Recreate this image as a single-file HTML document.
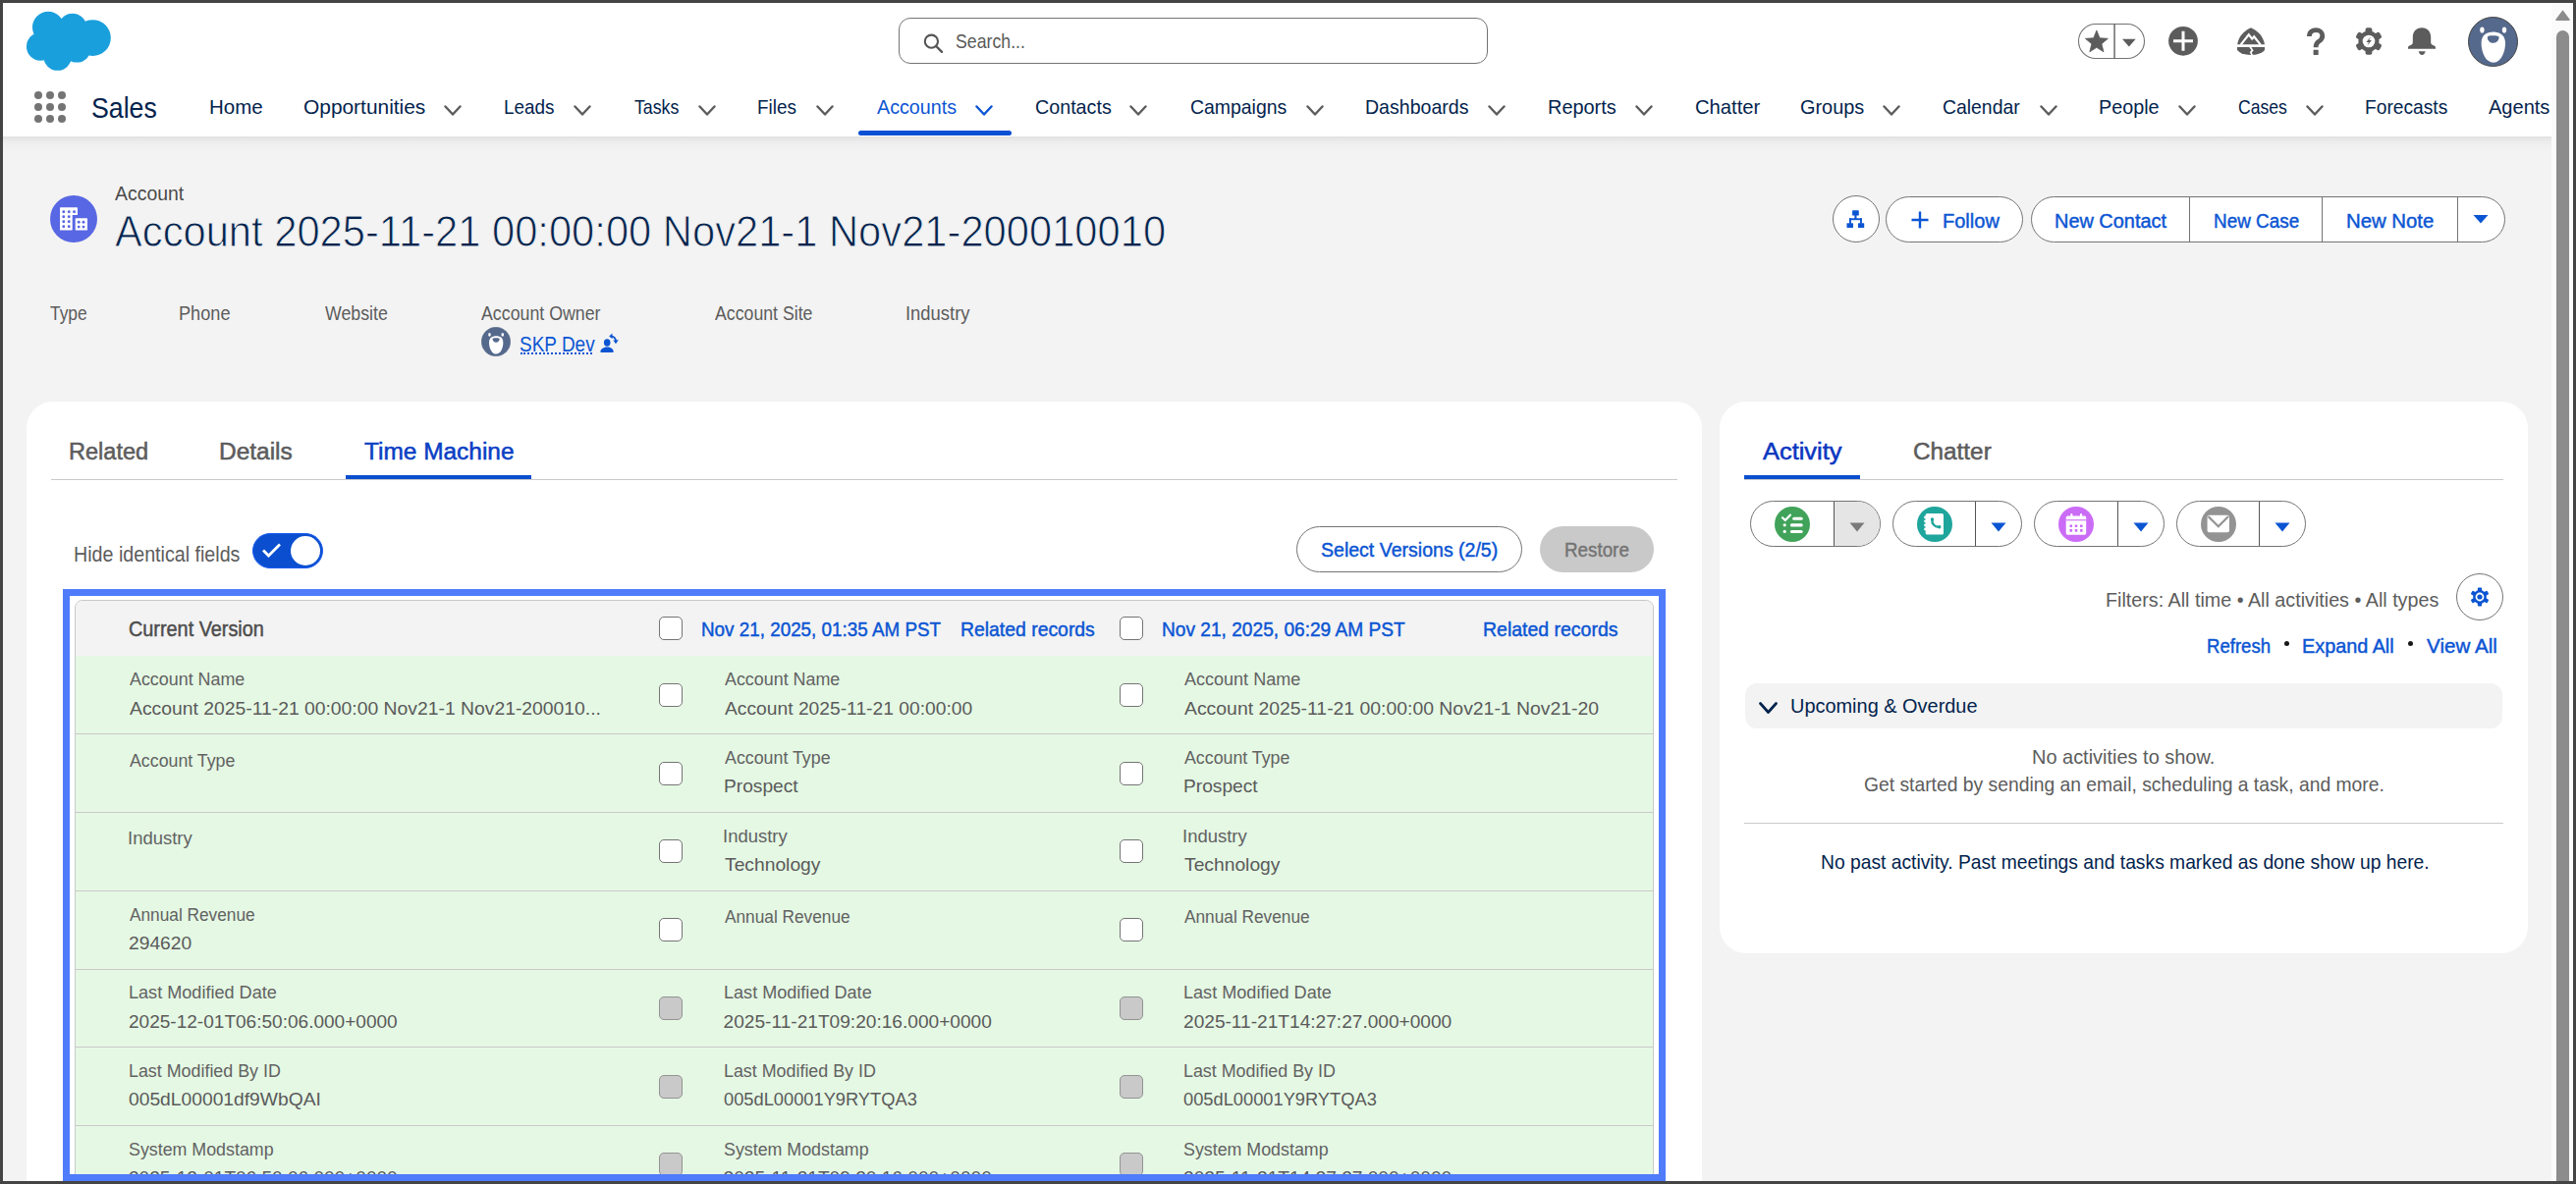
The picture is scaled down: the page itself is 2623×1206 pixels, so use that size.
<!DOCTYPE html>
<html><head><meta charset="utf-8"><style>
html,body{margin:0;padding:0;width:2623px;height:1206px;overflow:hidden;background:#f3f3f3}
body{position:relative;font-family:"Liberation Sans",sans-serif}
.a{position:absolute}
.t{position:absolute;white-space:nowrap;line-height:normal}
.cb{position:absolute;width:24px;height:24px;box-sizing:border-box;border:1.3px solid #747474;border-radius:5px;background:#fff}
.cb.dis{background:#c9c9c9;border-color:#939393}
</style></head><body>
<div class="a" style="left:0;top:0;width:2623px;height:1206px;background:#f3f3f3"></div>
<div class="a" style="left:0;top:0;width:2623px;height:139px;background:#fff"></div>
<div class="a" style="left:0;top:139px;width:2598px;height:17px;background:linear-gradient(rgba(0,0,0,0.075),rgba(0,0,0,0.035) 25%,rgba(0,0,0,0.012) 60%,rgba(0,0,0,0))"></div>
<svg class="a" style="left:20px;top:5px" width="100" height="75" viewBox="0 0 100 75">
<g fill="#1a9fdd">
<circle cx="29.1" cy="22.8" r="16.1"/><circle cx="53.8" cy="23.4" r="14.6"/><circle cx="74.4" cy="33.6" r="18.4"/>
<circle cx="21.2" cy="42.4" r="14.25"/><circle cx="38.6" cy="52.6" r="14.25"/><circle cx="58.3" cy="44.3" r="14.25"/>
<rect x="26" y="24" width="46" height="26"/>
</g></svg>
<div class="a" style="left:915px;top:18px;width:598px;height:45px;border:1px solid #747474;border-radius:12px;background:#fff"></div>
<svg class="a" style="left:938px;top:32px" width="24" height="24" viewBox="0 0 24 24">
<circle cx="10.4" cy="10.2" r="6.6" fill="none" stroke="#555" stroke-width="2.1"/>
<path d="M15.2 15 L21 20.8" stroke="#555" stroke-width="2.4" stroke-linecap="round"/></svg>
<svg class="a" style="left:35px;top:93px" width="32" height="32" viewBox="0 0 32 32"><g fill="#747474"><circle cx="4" cy="4" r="4"/><circle cx="16" cy="4" r="4"/><circle cx="28" cy="4" r="4"/><circle cx="4" cy="16" r="4"/><circle cx="16" cy="16" r="4"/><circle cx="28" cy="16" r="4"/><circle cx="4" cy="28" r="4"/><circle cx="16" cy="28" r="4"/><circle cx="28" cy="28" r="4"/></g></svg>
<svg class="a" style="left:452px;top:107px" width="18" height="11" viewBox="0 0 18 11"><path d="M1.5 1.5 L9.0 9.5 L16.5 1.5" fill="none" stroke="#5c5c5c" stroke-width="2.4" stroke-linecap="round" stroke-linejoin="round"/></svg>
<svg class="a" style="left:583.7px;top:107px" width="18" height="11" viewBox="0 0 18 11"><path d="M1.5 1.5 L9.0 9.5 L16.5 1.5" fill="none" stroke="#5c5c5c" stroke-width="2.4" stroke-linecap="round" stroke-linejoin="round"/></svg>
<svg class="a" style="left:711px;top:107px" width="18" height="11" viewBox="0 0 18 11"><path d="M1.5 1.5 L9.0 9.5 L16.5 1.5" fill="none" stroke="#5c5c5c" stroke-width="2.4" stroke-linecap="round" stroke-linejoin="round"/></svg>
<svg class="a" style="left:830.6px;top:107px" width="18" height="11" viewBox="0 0 18 11"><path d="M1.5 1.5 L9.0 9.5 L16.5 1.5" fill="none" stroke="#5c5c5c" stroke-width="2.4" stroke-linecap="round" stroke-linejoin="round"/></svg>
<svg class="a" style="left:993px;top:107px" width="18" height="11" viewBox="0 0 18 11"><path d="M1.5 1.5 L9.0 9.5 L16.5 1.5" fill="none" stroke="#0b55d3" stroke-width="2.4" stroke-linecap="round" stroke-linejoin="round"/></svg>
<svg class="a" style="left:1150px;top:107px" width="18" height="11" viewBox="0 0 18 11"><path d="M1.5 1.5 L9.0 9.5 L16.5 1.5" fill="none" stroke="#5c5c5c" stroke-width="2.4" stroke-linecap="round" stroke-linejoin="round"/></svg>
<svg class="a" style="left:1329.6px;top:107px" width="18" height="11" viewBox="0 0 18 11"><path d="M1.5 1.5 L9.0 9.5 L16.5 1.5" fill="none" stroke="#5c5c5c" stroke-width="2.4" stroke-linecap="round" stroke-linejoin="round"/></svg>
<svg class="a" style="left:1515px;top:107px" width="18" height="11" viewBox="0 0 18 11"><path d="M1.5 1.5 L9.0 9.5 L16.5 1.5" fill="none" stroke="#5c5c5c" stroke-width="2.4" stroke-linecap="round" stroke-linejoin="round"/></svg>
<svg class="a" style="left:1664.7px;top:107px" width="18" height="11" viewBox="0 0 18 11"><path d="M1.5 1.5 L9.0 9.5 L16.5 1.5" fill="none" stroke="#5c5c5c" stroke-width="2.4" stroke-linecap="round" stroke-linejoin="round"/></svg>
<svg class="a" style="left:1917px;top:107px" width="18" height="11" viewBox="0 0 18 11"><path d="M1.5 1.5 L9.0 9.5 L16.5 1.5" fill="none" stroke="#5c5c5c" stroke-width="2.4" stroke-linecap="round" stroke-linejoin="round"/></svg>
<svg class="a" style="left:2076.8px;top:107px" width="18" height="11" viewBox="0 0 18 11"><path d="M1.5 1.5 L9.0 9.5 L16.5 1.5" fill="none" stroke="#5c5c5c" stroke-width="2.4" stroke-linecap="round" stroke-linejoin="round"/></svg>
<svg class="a" style="left:2218px;top:107px" width="18" height="11" viewBox="0 0 18 11"><path d="M1.5 1.5 L9.0 9.5 L16.5 1.5" fill="none" stroke="#5c5c5c" stroke-width="2.4" stroke-linecap="round" stroke-linejoin="round"/></svg>
<svg class="a" style="left:2347.8px;top:107px" width="18" height="11" viewBox="0 0 18 11"><path d="M1.5 1.5 L9.0 9.5 L16.5 1.5" fill="none" stroke="#5c5c5c" stroke-width="2.4" stroke-linecap="round" stroke-linejoin="round"/></svg>
<div class="a" style="left:874px;top:133px;width:156px;height:5px;background:#0b50d4;border-radius:3px"></div>
<svg class="a" style="left:2100px;top:15px" width="400" height="50" viewBox="2100 15 400 50">
<rect x="2116.5" y="24.5" width="67" height="35" rx="17.5" fill="#fff" stroke="#747474" stroke-width="1.1"/>
<rect x="2152.4" y="24.5" width="1.3" height="35" fill="#555"/>
<path d="M2134.90 31.00 L2138.02 38.76 L2146.36 39.33 L2139.94 44.69 L2141.98 52.80 L2134.90 48.35 L2127.82 52.80 L2129.86 44.69 L2123.44 39.33 L2131.78 38.76 Z" fill="#5c5c5c" stroke="#5c5c5c" stroke-width="0.8" stroke-linejoin="round"/>
<path d="M2161 39.8 L2174.7 39.8 L2167.85 47.6 Z" fill="#5c5c5c"/>
<circle cx="2223" cy="41.8" r="14.9" fill="#5c5c5c"/>
<path d="M2223 31.8 V51.8 M2213 41.8 H2233" stroke="#fff" stroke-width="3"/>
<path d="M2292 28.2 C2286 31 2279.5 36 2278.2 45.3 L2306 45.3 C2304.5 36 2298 31 2292 28.2 Z" fill="#5c5c5c"/>
<path d="M2281.6 45.6 L2289.8 35.3 L2293.2 39.6 L2295.2 37.3 L2301.8 45.6" fill="none" stroke="#fff" stroke-width="2.2"/>
<path d="M2278 48 L2306 48 L2306 51 C2303 54.5 2298 55.9 2292 55.9 C2286 55.9 2281 54.5 2278 51 Z" fill="#5c5c5c"/>
<path d="M2291 47.5 L2293.6 51.3 L2291.8 53.2 L2293.2 56.5" fill="none" stroke="#fff" stroke-width="1.7"/>
<path d="M2351.4 37 C2351.4 32.4 2354.6 30.6 2358.2 30.6 C2362 30.6 2364.8 33 2364.8 36.4 C2364.8 39.8 2362.6 41.2 2360.7 42.5 C2358.8 43.8 2358.1 45 2358.1 48.3" fill="none" stroke="#5c5c5c" stroke-width="4.8"/>
<rect x="2355.6" y="50.8" width="5.1" height="5.1" rx="0.6" fill="#5c5c5c"/>
<g fill="#5c5c5c"><rect x="-3.4" y="-13.8" width="6.8" height="8" rx="1.8" transform="translate(2412 42) rotate(0)"/><rect x="-3.4" y="-13.8" width="6.8" height="8" rx="1.8" transform="translate(2412 42) rotate(60)"/><rect x="-3.4" y="-13.8" width="6.8" height="8" rx="1.8" transform="translate(2412 42) rotate(120)"/><rect x="-3.4" y="-13.8" width="6.8" height="8" rx="1.8" transform="translate(2412 42) rotate(180)"/><rect x="-3.4" y="-13.8" width="6.8" height="8" rx="1.8" transform="translate(2412 42) rotate(240)"/><rect x="-3.4" y="-13.8" width="6.8" height="8" rx="1.8" transform="translate(2412 42) rotate(300)"/><circle cx="2412" cy="42" r="10.6"/></g>
<circle cx="2412" cy="42" r="6.3" fill="#fff"/>
<path d="M2413.9 37.6 L2409.4 43 L2412 43 L2410.4 46.6 L2414.9 41.1 L2412.3 41.1 Z" fill="#5c5c5c"/>
<path d="M2466 28.2 C2460 28.2 2456.8 32.5 2456.8 38 L2456.8 43.5 C2456.8 45 2455 46 2453.5 46.5 C2452.3 47 2452 47.8 2452 48.6 L2452 49.8 L2480 49.8 L2480 48.6 C2480 47.8 2479.7 47 2478.5 46.5 C2477 46 2475.2 45 2475.2 43.5 L2475.2 38 C2475.2 32.5 2472 28.2 2466 28.2 Z" fill="#5c5c5c"/>
<path d="M2462.7 52.2 L2469.7 52.2 C2469.2 54.5 2467.8 55.9 2466.2 55.9 C2464.6 55.9 2463.2 54.5 2462.7 52.2 Z" fill="#5c5c5c"/>
</svg>
<svg class="a" style="left:2512.5px;top:16.5px" width="51" height="51" viewBox="0 0 51 51"><circle cx="25.5" cy="25.5" r="25" fill="#55698c" stroke="#444" stroke-width="1"/><ellipse cx="14.4" cy="13.5" rx="2.2" ry="3.1" fill="#fff"/><ellipse cx="37" cy="13.5" rx="2.2" ry="3.1" fill="#fff"/><path d="M25.8 15.6 C33 15.6 38 19 38 27 C38 37 33 46.8 25.8 46.8 C18.6 46.8 13.6 37 13.6 27 C13.6 19 18.6 15.6 25.8 15.6 Z" fill="#fff"/><path d="M19.8 21 C19.8 19.5 22 19.2 25.7 19.2 C29.4 19.2 31.6 19.5 31.6 21 C31.6 24.5 28.8 26.8 25.7 26.8 C22.6 26.8 19.8 24.5 19.8 21 Z" fill="#55698c"/></svg>
<svg class="a" style="left:51px;top:199px" width="48" height="48" viewBox="0 0 48 48">
<circle cx="24" cy="24" r="24" fill="#5867e3"/>
<g fill="#fff"><rect x="10" y="12.3" width="18" height="7.7" rx="0.5"/><rect x="10" y="19" width="12.7" height="16.4" rx="0.5"/><rect x="25.7" y="23.2" width="12.3" height="12.2" rx="0.5"/></g>
<g fill="#5867e3"><circle cx="13.8" cy="16.7" r="1.45"/><circle cx="19.2" cy="16.7" r="1.45"/><circle cx="24.5" cy="16.7" r="1.45"/><circle cx="13.8" cy="21.8" r="1.45"/><circle cx="19.2" cy="21.8" r="1.45"/><circle cx="13.8" cy="26.8" r="1.45"/><circle cx="19.2" cy="26.8" r="1.45"/><circle cx="13.8" cy="31.7" r="1.45"/><circle cx="19.2" cy="31.7" r="1.45"/><circle cx="29.2" cy="27.2" r="1.45"/><circle cx="34" cy="27.2" r="1.45"/><circle cx="29.2" cy="32.1" r="1.45"/><circle cx="34" cy="32.1" r="1.45"/></g></svg>
<div class="a" style="left:1866px;top:199px;width:46px;height:46px;border:1px solid #747474;border-radius:50%;background:#fff"></div>
<svg class="a" style="left:1870px;top:205px" width="40" height="35" viewBox="1870 205 40 35">
<g fill="#0b55d3"><rect x="1886.1" y="214.3" width="6.7" height="5.3" rx="0.6"/><rect x="1888.4" y="219" width="2.1" height="4"/>
<rect x="1883" y="222.3" width="12.9" height="1.9"/><rect x="1883" y="222.3" width="1.9" height="5.5"/><rect x="1894" y="222.3" width="1.9" height="5.5"/>
<rect x="1880.5" y="227.2" width="6.5" height="4.8" rx="0.5"/><rect x="1892" y="227.2" width="6.2" height="4.8" rx="0.5"/></g></svg>
<div class="a" style="left:1920px;top:200px;width:138px;height:45px;border:1px solid #747474;border-radius:24px;background:#fff"></div>
<svg class="a" style="left:1944px;top:213px" width="22" height="22" viewBox="0 0 22 22"><path d="M11 2.5 V19.5 M2.5 11 H19.5" stroke="#0b55d3" stroke-width="2.4"/></svg>
<div class="a" style="left:2067.5px;top:200px;width:481px;height:45px;border:1px solid #747474;border-radius:24px;background:#fff"></div>
<div class="a" style="left:2228.5px;top:201px;width:1px;height:45px;background:#747474"></div>
<div class="a" style="left:2363.5px;top:201px;width:1px;height:45px;background:#747474"></div>
<div class="a" style="left:2502.1px;top:201px;width:1px;height:45px;background:#747474"></div>
<svg class="a" style="left:2516px;top:216px" width="20" height="14" viewBox="0 0 20 14"><path d="M2.5 3 L17.5 3 L10 11.5 Z" fill="#0b55d3"/></svg>
<svg class="a" style="left:490.0px;top:333.0px" width="30" height="30" viewBox="0 0 51 51"><circle cx="25.5" cy="25.5" r="25" fill="#55698c" stroke="#5c6f8c" stroke-width="1"/><ellipse cx="14.4" cy="13.5" rx="2.2" ry="3.1" fill="#fff"/><ellipse cx="37" cy="13.5" rx="2.2" ry="3.1" fill="#fff"/><path d="M25.8 15.6 C33 15.6 38 19 38 27 C38 37 33 46.8 25.8 46.8 C18.6 46.8 13.6 37 13.6 27 C13.6 19 18.6 15.6 25.8 15.6 Z" fill="#fff"/><path d="M19.8 21 C19.8 19.5 22 19.2 25.7 19.2 C29.4 19.2 31.6 19.5 31.6 21 C31.6 24.5 28.8 26.8 25.7 26.8 C22.6 26.8 19.8 24.5 19.8 21 Z" fill="#55698c"/></svg>
<div class="a" style="left:529.5px;top:359px;width:73px;height:0;border-top:2px dotted #0b55d3"></div>
<svg class="a" style="left:606px;top:335px" width="30" height="30" viewBox="606 335 30 30">
<g fill="#0b55d3"><ellipse cx="618.2" cy="349" rx="3.3" ry="3.7"/>
<path d="M611.4 358.2 C611.4 355.8 614 354.6 616.5 353.6 L620 353.6 C622.5 354.6 624.7 355.8 624.7 358.2 C624.7 358.8 624.3 359.1 623.6 359.1 L612.5 359.1 C611.8 359.1 611.4 358.8 611.4 358.2 Z"/>
<path d="M620.2 342.4 L623.4 339.4 L623.6 345.2 Z"/><path d="M624.4 346.6 L629.8 346.3 L627 350.2 Z"/></g>
<path d="M622.5 342.3 C625 342.8 626.8 344.8 627 347.2" fill="none" stroke="#0b55d3" stroke-width="1.8"/></svg>
<div class="a" style="left:27px;top:409px;width:1706px;height:900px;background:#fff;border-radius:27px"></div>
<div class="a" style="left:52px;top:488px;width:1656px;height:1px;background:#c9c9c9"></div>
<div class="a" style="left:352px;top:484px;width:189px;height:4px;background:#0b4fd0"></div>
<svg class="a" style="left:257px;top:543px" width="72" height="36" viewBox="0 0 72 36">
<rect x="0.5" y="0.5" width="71" height="35" rx="17.5" fill="#0b4fd0" stroke="#1a5cf0" stroke-width="1"/>
<circle cx="54" cy="18" r="15" fill="#fff"/>
<path d="M11 17.5 L16.5 23 L28 11.5" fill="none" stroke="#fff" stroke-width="2.8"/></svg>
<div class="a" style="left:1320px;top:536px;width:228px;height:45px;border:1px solid #747474;border-radius:24px;background:#fff"></div>
<div class="a" style="left:1568px;top:536px;width:116px;height:47px;border-radius:24px;background:#c9c9c9"></div>
<div class="a" style="left:64px;top:600px;width:1632px;height:603px;box-sizing:border-box;border:7px solid #4f7cfb"></div>
<div class="a" id="clip" style="left:71px;top:607px;width:1618px;height:589px;overflow:hidden;background:#fff"><div class="a" style="left:5.00px;top:4.00px;width:1608.00px;height:700.00px;background:#e5f8e4;border:1px solid #c9c9c9;border-radius:8px;box-sizing:border-box"></div>
<div class="a" style="left:6.00px;top:5.00px;width:1606.00px;height:56.00px;background:#f3f3f3;border-radius:7px 7px 0 0"></div>
<div class="a" style="left:6.00px;top:140.25px;width:1606.00px;height:1.00px;background:#c9c9c9"></div>
<div class="a" style="left:6.00px;top:220.00px;width:1606.00px;height:1.00px;background:#c9c9c9"></div>
<div class="a" style="left:6.00px;top:299.75px;width:1606.00px;height:1.00px;background:#c9c9c9"></div>
<div class="a" style="left:6.00px;top:379.50px;width:1606.00px;height:1.00px;background:#c9c9c9"></div>
<div class="a" style="left:6.00px;top:459.25px;width:1606.00px;height:1.00px;background:#c9c9c9"></div>
<div class="a" style="left:6.00px;top:539.00px;width:1606.00px;height:1.00px;background:#c9c9c9"></div>
<div class="cb" style="left:600.00px;top:21.00px"></div>
<div class="cb" style="left:1069.00px;top:21.00px"></div>
<div class="cb" style="left:600.00px;top:88.90px"></div>
<div class="cb" style="left:1069.00px;top:88.90px"></div>
<div class="cb" style="left:600.00px;top:168.65px"></div>
<div class="cb" style="left:1069.00px;top:168.65px"></div>
<div class="cb" style="left:600.00px;top:248.40px"></div>
<div class="cb" style="left:1069.00px;top:248.40px"></div>
<div class="cb" style="left:600.00px;top:328.15px"></div>
<div class="cb" style="left:1069.00px;top:328.15px"></div>
<div class="cb dis" style="left:600.00px;top:407.90px"></div>
<div class="cb dis" style="left:1069.00px;top:407.90px"></div>
<div class="cb dis" style="left:600.00px;top:487.65px"></div>
<div class="cb dis" style="left:1069.00px;top:487.65px"></div>
<div class="cb dis" style="left:600.00px;top:567.40px"></div>
<div class="cb dis" style="left:1069.00px;top:567.40px"></div><div class="t" style="left:60.60px;top:75.33px;font-size:17.68px;color:#626262;transform:scaleX(1.0122);transform-origin:0 0;">Account Name</div>
<div class="t" style="left:60.60px;top:103.60px;font-size:19.13px;color:#5a5a5a;transform:scaleX(1.0114);transform-origin:0 0;">Account 2025-11-21 00:00:00 Nov21-1 Nov21-200010...</div>
<div class="t" style="left:666.60px;top:75.33px;font-size:17.68px;color:#626262;transform:scaleX(1.0122);transform-origin:0 0;">Account Name</div>
<div class="t" style="left:666.60px;top:103.60px;font-size:19.13px;color:#5a5a5a;transform:scaleX(1.0072);transform-origin:0 0;">Account 2025-11-21 00:00:00</div>
<div class="t" style="left:1135.00px;top:75.33px;font-size:17.68px;color:#626262;transform:scaleX(1.0200);transform-origin:0 0;">Account Name</div>
<div class="t" style="left:1135.00px;top:103.60px;font-size:19.13px;color:#5a5a5a;transform:scaleX(1.0144);transform-origin:0 0;">Account 2025-11-21 00:00:00 Nov21-1 Nov21-20</div>
<div class="t" style="left:60.60px;top:157.68px;font-size:17.68px;color:#626262;transform:scaleX(1.0057);transform-origin:0 0;">Account Type</div>
<div class="t" style="left:666.60px;top:155.08px;font-size:17.68px;color:#626262;transform:scaleX(1.0075);transform-origin:0 0;">Account Type</div>
<div class="t" style="left:665.60px;top:183.35px;font-size:19.13px;color:#5a5a5a;transform:scaleX(1.0027);transform-origin:0 0;">Prospect</div>
<div class="t" style="left:1135.00px;top:155.08px;font-size:17.68px;color:#626262;transform:scaleX(1.0057);transform-origin:0 0;">Account Type</div>
<div class="t" style="left:1134.00px;top:183.35px;font-size:19.13px;color:#5a5a5a;transform:scaleX(1.0027);transform-origin:0 0;">Prospect</div>
<div class="t" style="left:58.51px;top:237.43px;font-size:17.68px;color:#626262;transform:scaleX(1.0443);transform-origin:0 0;">Industry</div>
<div class="t" style="left:664.51px;top:234.83px;font-size:17.68px;color:#626262;transform:scaleX(1.0443);transform-origin:0 0;">Industry</div>
<div class="t" style="left:666.60px;top:263.10px;font-size:19.13px;color:#5a5a5a;transform:scaleX(1.0082);transform-origin:0 0;">Technology</div>
<div class="t" style="left:1132.91px;top:234.83px;font-size:17.68px;color:#626262;transform:scaleX(1.0443);transform-origin:0 0;">Industry</div>
<div class="t" style="left:1135.00px;top:263.10px;font-size:19.13px;color:#5a5a5a;transform:scaleX(1.0082);transform-origin:0 0;">Technology</div>
<div class="t" style="left:60.60px;top:314.58px;font-size:17.68px;color:#626262;transform:scaleX(0.9769);transform-origin:0 0;">Annual Revenue</div>
<div class="t" style="left:59.59px;top:342.85px;font-size:19.13px;color:#5a5a5a;transform:scaleX(1.0065);transform-origin:0 0;">294620</div>
<div class="t" style="left:666.60px;top:317.18px;font-size:17.68px;color:#626262;transform:scaleX(0.9769);transform-origin:0 0;">Annual Revenue</div>
<div class="t" style="left:1135.00px;top:317.18px;font-size:17.68px;color:#626262;transform:scaleX(0.9769);transform-origin:0 0;">Annual Revenue</div>
<div class="t" style="left:59.58px;top:394.33px;font-size:17.68px;color:#626262;transform:scaleX(1.0233);transform-origin:0 0;">Last Modified Date</div>
<div class="t" style="left:59.60px;top:422.60px;font-size:19.13px;color:#5a5a5a;transform:scaleX(0.9963);transform-origin:0 0;">2025-12-01T06:50:06.000+0000</div>
<div class="t" style="left:665.58px;top:394.33px;font-size:17.68px;color:#626262;transform:scaleX(1.0226);transform-origin:0 0;">Last Modified Date</div>
<div class="t" style="left:665.60px;top:422.60px;font-size:19.13px;color:#5a5a5a;">2025-11-21T09:20:16.000+0000</div>
<div class="t" style="left:1133.98px;top:394.33px;font-size:17.68px;color:#626262;transform:scaleX(1.0233);transform-origin:0 0;">Last Modified Date</div>
<div class="t" style="left:1134.00px;top:422.60px;font-size:19.13px;color:#5a5a5a;">2025-11-21T14:27:27.000+0000</div>
<div class="t" style="left:59.59px;top:474.08px;font-size:17.68px;color:#626262;transform:scaleX(1.0105);transform-origin:0 0;">Last Modified By ID</div>
<div class="t" style="left:59.59px;top:502.35px;font-size:19.13px;color:#5a5a5a;transform:scaleX(1.0073);transform-origin:0 0;">005dL00001df9WbQAI</div>
<div class="t" style="left:665.59px;top:474.08px;font-size:17.68px;color:#626262;transform:scaleX(1.0105);transform-origin:0 0;">Last Modified By ID</div>
<div class="t" style="left:665.64px;top:502.35px;font-size:19.13px;color:#5a5a5a;transform:scaleX(0.9564);transform-origin:0 0;">005dL00001Y9RYTQA3</div>
<div class="t" style="left:1133.99px;top:474.08px;font-size:17.68px;color:#626262;transform:scaleX(1.0105);transform-origin:0 0;">Last Modified By ID</div>
<div class="t" style="left:1134.04px;top:502.35px;font-size:19.13px;color:#5a5a5a;transform:scaleX(0.9564);transform-origin:0 0;">005dL00001Y9RYTQA3</div>
<div class="t" style="left:59.59px;top:553.83px;font-size:17.68px;color:#626262;transform:scaleX(1.0083);transform-origin:0 0;">System Modstamp</div>
<div class="t" style="left:59.60px;top:582.10px;font-size:19.13px;color:#5a5a5a;transform:scaleX(0.9963);transform-origin:0 0;">2025-12-01T06:50:06.000+0000</div>
<div class="t" style="left:665.59px;top:553.83px;font-size:17.68px;color:#626262;transform:scaleX(1.0083);transform-origin:0 0;">System Modstamp</div>
<div class="t" style="left:665.60px;top:582.10px;font-size:19.13px;color:#5a5a5a;">2025-11-21T09:20:16.000+0000</div>
<div class="t" style="left:1133.99px;top:553.83px;font-size:17.68px;color:#626262;transform:scaleX(1.0083);transform-origin:0 0;">System Modstamp</div>
<div class="t" style="left:1134.00px;top:582.10px;font-size:19.13px;color:#5a5a5a;">2025-11-21T14:27:27.000+0000</div></div>
<div class="a" style="left:1751px;top:409px;width:823px;height:562px;background:#fff;border-radius:27px"></div>
<div class="a" style="left:1776px;top:488px;width:773px;height:1px;background:#c9c9c9"></div>
<div class="a" style="left:1776px;top:484px;width:118px;height:4px;background:#0b4fd0"></div>
<div class="a" style="left:1782px;top:510px;width:130.7px;height:45px;border:1px solid #747474;border-radius:24px;background:#fff;overflow:hidden"><div class="a" style="left:84.4px;top:0;width:47.3px;height:45px;background:#e5e5e5"></div></div>
<div class="a" style="left:1867px;top:511px;width:1px;height:45px;background:#555"></div>
<svg class="a" style="left:1882.1px;top:529.5px" width="18" height="14" viewBox="0 0 18 14"><path d="M1.5 2.5 L16.5 2.5 L9 11.5 Z" fill="#7a7a7a"/></svg>
<svg class="a" style="left:1807px;top:516px" width="36" height="36" viewBox="0 0 36 36"><circle cx="18" cy="18" r="18" fill="#41a35a"/>
<path d="M8 11.3 L10.8 14 L16 8.6" fill="none" stroke="#fff" stroke-width="2.2" stroke-linecap="round" stroke-linejoin="round"/>
<g fill="#fff"><rect x="18.2" y="10.7" width="10.5" height="3.1" rx="1.5"/><rect x="15.9" y="17.3" width="12.8" height="3.1" rx="1.5"/><rect x="15.9" y="23.9" width="12.8" height="3.1" rx="1.5"/>
<circle cx="10.2" cy="18.8" r="1.6"/><circle cx="10.2" cy="25.4" r="1.6"/></g></svg>
<div class="a" style="left:1927px;top:510px;width:130.0px;height:45px;border:1px solid #747474;border-radius:24px;background:#fff;overflow:hidden"></div>
<div class="a" style="left:2011px;top:511px;width:1px;height:45px;background:#555"></div>
<svg class="a" style="left:2026.2px;top:529.5px" width="18" height="14" viewBox="0 0 18 14"><path d="M1.5 2.5 L16.5 2.5 L9 11.5 Z" fill="#0b55d3"/></svg>
<svg class="a" style="left:1952px;top:516px" width="36" height="36" viewBox="0 0 36 36"><circle cx="18" cy="18" r="18" fill="#1ea59c"/>
<rect x="8.7" y="7" width="18.3" height="21.5" rx="1.6" fill="#fff"/>
<g fill="#fff"><circle cx="8.5" cy="11" r="1.4"/><circle cx="8.5" cy="15" r="1.4"/><circle cx="8.5" cy="19" r="1.4"/><circle cx="8.5" cy="23" r="1.4"/></g>
<path d="M15.4 13.4 C14.8 17.6 18.2 21 22.4 20.7" fill="none" stroke="#1ea59c" stroke-width="2.4" stroke-linecap="round"/>
<circle cx="15.5" cy="13" r="1.7" fill="#1ea59c"/><circle cx="22.8" cy="20.7" r="1.7" fill="#1ea59c"/></svg>
<div class="a" style="left:2071px;top:510px;width:131.0px;height:45px;border:1px solid #747474;border-radius:24px;background:#fff;overflow:hidden"></div>
<div class="a" style="left:2156px;top:511px;width:1px;height:45px;background:#555"></div>
<svg class="a" style="left:2171.0px;top:529.5px" width="18" height="14" viewBox="0 0 18 14"><path d="M1.5 2.5 L16.5 2.5 L9 11.5 Z" fill="#0b55d3"/></svg>
<svg class="a" style="left:2096px;top:516px" width="36" height="36" viewBox="0 0 36 36"><circle cx="18" cy="18" r="18" fill="#cb6cf6"/>
<rect x="7.7" y="9.5" width="20.5" height="19.2" rx="1.6" fill="#fff"/>
<rect x="7.7" y="13.2" width="20.5" height="1.1" fill="#cb6cf6"/>
<g fill="#fff"><rect x="12.3" y="7" width="2.1" height="4" rx="1"/><rect x="22" y="7" width="2.1" height="4" rx="1"/></g>
<g fill="#cb6cf6"><rect x="11.5" y="18.4" width="2.6" height="2.6" rx="0.4"/><rect x="16.7" y="18.4" width="2.6" height="2.6" rx="0.4"/><rect x="22" y="18.4" width="2.6" height="2.6" rx="0.4"/>
<rect x="11.5" y="23.1" width="2.6" height="2.6" rx="0.4"/><rect x="16.7" y="23.1" width="2.6" height="2.6" rx="0.4"/><rect x="22" y="23.1" width="2.6" height="2.6" rx="0.4"/></g></svg>
<div class="a" style="left:2216px;top:510px;width:130.0px;height:45px;border:1px solid #747474;border-radius:24px;background:#fff;overflow:hidden"></div>
<div class="a" style="left:2300px;top:511px;width:1px;height:45px;background:#555"></div>
<svg class="a" style="left:2315.2px;top:529.5px" width="18" height="14" viewBox="0 0 18 14"><path d="M1.5 2.5 L16.5 2.5 L9 11.5 Z" fill="#0b55d3"/></svg>
<svg class="a" style="left:2241px;top:516px" width="36" height="36" viewBox="0 0 36 36"><circle cx="18" cy="18" r="18" fill="#939393"/>
<rect x="6.6" y="8.8" width="22.4" height="17.4" rx="1.8" fill="#fff"/>
<path d="M7.5 10 L17.8 20.3 L28.1 10" fill="none" stroke="#939393" stroke-width="2.2"/></svg>
<div class="a" style="left:2501px;top:584px;width:46px;height:46px;border:1px solid #747474;border-radius:50%;background:#fff"></div>
<svg class="a" style="left:2513.6px;top:597.4px" width="22" height="22" viewBox="-11 -11 22 22"><g fill="#0b55d3"><rect x="-2.1" y="-9.6" width="4.2" height="5" rx="1" transform="rotate(0)"/><rect x="-2.1" y="-9.6" width="4.2" height="5" rx="1" transform="rotate(60)"/><rect x="-2.1" y="-9.6" width="4.2" height="5" rx="1" transform="rotate(120)"/><rect x="-2.1" y="-9.6" width="4.2" height="5" rx="1" transform="rotate(180)"/><rect x="-2.1" y="-9.6" width="4.2" height="5" rx="1" transform="rotate(240)"/><rect x="-2.1" y="-9.6" width="4.2" height="5" rx="1" transform="rotate(300)"/><circle r="6.9"/></g><circle r="4.4" fill="#fff"/><circle r="2.6" fill="#0b55d3"/></svg>
<div class="a" style="left:2326px;top:653px;width:5px;height:5px;border-radius:50%;background:#181818"></div>
<div class="a" style="left:2451.5px;top:653px;width:5px;height:5px;border-radius:50%;background:#181818"></div>
<div class="a" style="left:1777px;top:695.5px;width:771px;height:46.5px;background:#f3f3f3;border-radius:12px"></div>
<svg class="a" style="left:1791px;top:715px" width="19" height="12" viewBox="0 0 19 12"><path d="M1.5 1.5 L9.5 10.5 L17.5 1.5" fill="none" stroke="#03234d" stroke-width="2.7" stroke-linecap="round" stroke-linejoin="round"/></svg>
<div class="a" style="left:1776px;top:838px;width:773px;height:1px;background:#c9c9c9"></div>
<div class="t" style="left:972.91px;top:31.11px;font-size:19.93px;color:#5a5a5a;transform:scaleX(0.8896);transform-origin:0 0;">Search...</div>
<div class="t" style="left:92.87px;top:92.53px;font-size:30.29px;color:#03234d;transform:scaleX(0.8818);transform-origin:0 0;">Sales</div>
<div class="t" style="left:213.29px;top:97.80px;font-size:20.43px;color:#03234d;transform:scaleX(1.0038);transform-origin:0 0;">Home</div>
<div class="t" style="left:308.78px;top:97.80px;font-size:20.43px;color:#03234d;transform:scaleX(1.0233);transform-origin:0 0;">Opportunities</div>
<div class="t" style="left:513.15px;top:97.80px;font-size:20.43px;color:#03234d;transform:scaleX(0.9245);transform-origin:0 0;">Leads</div>
<div class="t" style="left:645.80px;top:97.80px;font-size:20.43px;color:#03234d;transform:scaleX(0.8692);transform-origin:0 0;">Tasks</div>
<div class="t" style="left:771.15px;top:97.80px;font-size:20.43px;color:#03234d;transform:scaleX(0.9268);transform-origin:0 0;">Files</div>
<div class="t" style="left:893.00px;top:97.80px;font-size:20.43px;color:#0b55d3;transform:scaleX(0.9639);transform-origin:0 0;">Accounts</div>
<div class="t" style="left:1053.84px;top:97.80px;font-size:20.43px;color:#03234d;transform:scaleX(0.9646);transform-origin:0 0;">Contacts</div>
<div class="t" style="left:1212.05px;top:97.80px;font-size:20.43px;color:#03234d;transform:scaleX(0.9510);transform-origin:0 0;">Campaigns</div>
<div class="t" style="left:1389.69px;top:97.80px;font-size:20.43px;color:#03234d;transform:scaleX(0.9574);transform-origin:0 0;">Dashboards</div>
<div class="t" style="left:1575.75px;top:97.80px;font-size:20.43px;color:#03234d;transform:scaleX(0.9754);transform-origin:0 0;">Reports</div>
<div class="t" style="left:1725.61px;top:97.80px;font-size:20.43px;color:#03234d;transform:scaleX(0.9909);transform-origin:0 0;">Chatter</div>
<div class="t" style="left:1832.73px;top:97.80px;font-size:20.43px;color:#03234d;transform:scaleX(0.9738);transform-origin:0 0;">Groups</div>
<div class="t" style="left:1978.05px;top:97.80px;font-size:20.43px;color:#03234d;transform:scaleX(0.9488);transform-origin:0 0;">Calendar</div>
<div class="t" style="left:2136.56px;top:97.80px;font-size:20.43px;color:#03234d;transform:scaleX(0.9689);transform-origin:0 0;">People</div>
<div class="t" style="left:2278.64px;top:97.80px;font-size:20.43px;color:#03234d;transform:scaleX(0.8625);transform-origin:0 0;">Cases</div>
<div class="t" style="left:2407.62px;top:97.80px;font-size:20.43px;color:#03234d;transform:scaleX(0.9402);transform-origin:0 0;">Forecasts</div>
<div class="t" style="left:2533.70px;top:97.80px;font-size:20.43px;color:#03234d;transform:scaleX(0.9810);transform-origin:0 0;">Agents</div>
<div class="t" style="left:117.30px;top:186.10px;font-size:20.43px;color:#4a4a4a;transform:scaleX(0.9514);transform-origin:0 0;">Account</div>
<div class="t" style="left:116.60px;top:210.63px;font-size:43.77px;color:#03234d;transform:scaleX(0.9526);transform-origin:0 0;-webkit-text-stroke:0.9px #f3f3f3;">Account 2025-11-21 00:00:00 Nov21-1 Nov21-200010010</div>
<div class="t" style="left:1977.63px;top:213.27px;font-size:20.58px;color:#0b55d3;-webkit-text-stroke:0.45px #0b55d3;transform:scaleX(0.9729);transform-origin:0 0;">Follow</div>
<div class="t" style="left:2091.63px;top:213.27px;font-size:20.58px;color:#0b55d3;-webkit-text-stroke:0.45px #0b55d3;transform:scaleX(0.9675);transform-origin:0 0;">New Contact</div>
<div class="t" style="left:2254.08px;top:213.27px;font-size:20.58px;color:#0b55d3;-webkit-text-stroke:0.45px #0b55d3;transform:scaleX(0.9194);transform-origin:0 0;">New Case</div>
<div class="t" style="left:2389.01px;top:213.27px;font-size:20.58px;color:#0b55d3;-webkit-text-stroke:0.45px #0b55d3;transform:scaleX(0.9888);transform-origin:0 0;">New Note</div>
<div class="t" style="left:51.00px;top:307.83px;font-size:19.86px;color:#5c5c5c;transform:scaleX(0.8762);transform-origin:0 0;">Type</div>
<div class="t" style="left:182.17px;top:307.83px;font-size:19.86px;color:#5c5c5c;transform:scaleX(0.9145);transform-origin:0 0;">Phone</div>
<div class="t" style="left:330.50px;top:307.83px;font-size:19.86px;color:#5c5c5c;transform:scaleX(0.8944);transform-origin:0 0;">Website</div>
<div class="t" style="left:490.30px;top:307.83px;font-size:19.86px;color:#5c5c5c;transform:scaleX(0.8949);transform-origin:0 0;">Account Owner</div>
<div class="t" style="left:728.00px;top:307.83px;font-size:19.86px;color:#5c5c5c;transform:scaleX(0.8919);transform-origin:0 0;">Account Site</div>
<div class="t" style="left:922.14px;top:307.83px;font-size:19.86px;color:#5c5c5c;transform:scaleX(0.9275);transform-origin:0 0;">Industry</div>
<div class="t" style="left:529.32px;top:337.84px;font-size:21.59px;color:#0b55d3;transform:scaleX(0.8791);transform-origin:0 0;">SKP Dev</div>
<div class="t" style="left:69.79px;top:446.03px;font-size:24.64px;color:#5c5c5c;-webkit-text-stroke:0.54px #5c5c5c;transform:scaleX(0.9561);transform-origin:0 0;">Related</div>
<div class="t" style="left:222.51px;top:446.03px;font-size:24.64px;color:#5c5c5c;-webkit-text-stroke:0.54px #5c5c5c;transform:scaleX(0.9932);transform-origin:0 0;">Details</div>
<div class="t" style="left:370.60px;top:446.03px;font-size:24.64px;color:#0a3fc4;-webkit-text-stroke:0.54px #0a3fc4;transform:scaleX(0.9922);transform-origin:0 0;">Time Machine</div>
<div class="t" style="left:75.14px;top:552.63px;font-size:21.16px;color:#5c5c5c;transform:scaleX(0.9294);transform-origin:0 0;">Hide identical fields</div>
<div class="t" style="left:1345.04px;top:549.03px;font-size:20.29px;color:#0b55d3;-webkit-text-stroke:0.45px #0b55d3;transform:scaleX(0.9632);transform-origin:0 0;">Select Versions (2/5)</div>
<div class="t" style="left:1593.37px;top:549.03px;font-size:20.29px;color:#747474;-webkit-text-stroke:0.45px #747474;transform:scaleX(0.9271);transform-origin:0 0;">Restore</div>
<div class="t" style="left:130.67px;top:629.30px;font-size:21.30px;color:#4d4d4d;-webkit-text-stroke:0.47px #4d4d4d;transform:scaleX(0.9315);transform-origin:0 0;">Current Version</div>
<div class="t" style="left:714.38px;top:629.70px;font-size:20.43px;color:#0b55d3;-webkit-text-stroke:0.45px #0b55d3;transform:scaleX(0.9228);transform-origin:0 0;">Nov 21, 2025, 01:35 AM PST</div>
<div class="t" style="left:978.35px;top:629.70px;font-size:20.43px;color:#0b55d3;-webkit-text-stroke:0.45px #0b55d3;transform:scaleX(0.9490);transform-origin:0 0;">Related records</div>
<div class="t" style="left:1183.06px;top:629.70px;font-size:20.43px;color:#0b55d3;-webkit-text-stroke:0.45px #0b55d3;transform:scaleX(0.9365);transform-origin:0 0;">Nov 21, 2025, 06:29 AM PST</div>
<div class="t" style="left:1510.05px;top:629.70px;font-size:20.43px;color:#0b55d3;-webkit-text-stroke:0.45px #0b55d3;transform:scaleX(0.9538);transform-origin:0 0;">Related records</div>
<div class="t" style="left:1795.00px;top:446.03px;font-size:24.64px;color:#0a36c0;-webkit-text-stroke:0.54px #0a36c0;transform:scaleX(1.0321);transform-origin:0 0;">Activity</div>
<div class="t" style="left:1948.01px;top:446.03px;font-size:24.64px;color:#5c5c5c;-webkit-text-stroke:0.54px #5c5c5c;transform:scaleX(0.9875);transform-origin:0 0;">Chatter</div>
<div class="t" style="left:2144.41px;top:600.13px;font-size:19.86px;color:#5c5c5c;transform:scaleX(0.9929);transform-origin:0 0;">Filters: All time • All activities • All types</div>
<div class="t" style="left:2246.58px;top:647.07px;font-size:20.14px;color:#0b55d3;-webkit-text-stroke:0.44px #0b55d3;transform:scaleX(0.9232);transform-origin:0 0;">Refresh</div>
<div class="t" style="left:2344.42px;top:647.07px;font-size:20.14px;color:#0b55d3;-webkit-text-stroke:0.44px #0b55d3;transform:scaleX(0.9849);transform-origin:0 0;">Expand All</div>
<div class="t" style="left:2471.00px;top:647.07px;font-size:20.14px;color:#0b55d3;-webkit-text-stroke:0.44px #0b55d3;transform:scaleX(1.0246);transform-origin:0 0;">View All</div>
<div class="t" style="left:1822.72px;top:707.90px;font-size:20.43px;color:#03234d;transform:scaleX(0.9758);transform-origin:0 0;">Upcoming &amp; Overdue</div>
<div class="t" style="left:2069.35px;top:759.50px;font-size:20.43px;color:#5c5c5c;transform:scaleX(0.9770);transform-origin:0 0;">No activities to show.</div>
<div class="t" style="left:1898.06px;top:788.10px;font-size:20.43px;color:#5c5c5c;transform:scaleX(0.9448);transform-origin:0 0;">Get started by sending an email, scheduling a task, and more.</div>
<div class="t" style="left:1853.61px;top:867.00px;font-size:20.43px;color:#03234d;transform:scaleX(0.9433);transform-origin:0 0;">No past activity. Past meetings and tasks marked as done show up here.</div>
<div class="a" style="left:2598px;top:0;width:25px;height:1206px;background:#fbfbfb"></div>
<svg class="a" style="left:2600px;top:8px" width="20" height="16" viewBox="0 0 20 16"><path d="M9.5 3.4 L16 12.2 L3 12.2 Z" fill="#8c8c8c" stroke="#8c8c8c" stroke-width="1.5" stroke-linejoin="round"/></svg>
<div class="a" style="left:2603px;top:31px;width:13px;height:1180px;background:#8c8c8c;border-radius:6.5px"></div>
<div class="a" style="left:0;top:0;width:2623px;height:1206px;box-sizing:border-box;border:3px solid #444;pointer-events:none;z-index:10"></div>
</body></html>
